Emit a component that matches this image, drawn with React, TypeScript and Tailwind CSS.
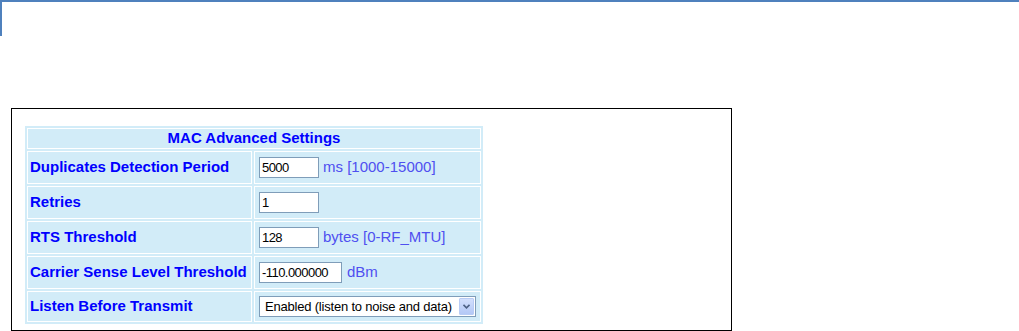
import React from "react";

const Input = ({ value, w }: { value: string; w: string }) => (
  <div
    className={`flex h-[21px] items-center border border-[#7f9db9] bg-white pl-[2px] text-[13px] leading-none tracking-[-0.55px] text-black ${w}`}
  >
    {value}
  </div>
);

const Label = ({ children, h = "h-[33px]" }: { children: React.ReactNode; h?: string }) => (
  <div className={`flex items-center whitespace-nowrap border border-white bg-[#d2ecf8] pl-[2px] text-[15px] font-bold text-[#0000ff] ${h}`}>
    {children}
  </div>
);

const Value = ({ children, h = "h-[33px]" }: { children: React.ReactNode; h?: string }) => (
  <div className={`flex items-center border border-white bg-[#d2ecf8] pl-[4px] ${h}`}>{children}</div>
);

const Unit = ({ children, ml = "ml-[4px]" }: { children: React.ReactNode; ml?: string }) => (
  <span className={`${ml} text-[15px] text-[#4f4ff0]`}>{children}</span>
);

export default function App() {
  return (
    <div className="h-[331px] w-[1019px] overflow-hidden bg-white font-['Liberation_Sans',Arial,sans-serif]">
      <div className="h-[36px] border-l-2 border-t-2 border-[#4f81bd]" />
      <div className="ml-[11px] mt-[72px] h-[223px] w-[721px] border border-black pl-[13px] pt-[17px]">
        <div className="grid w-[458px] grid-cols-[225px_227px] gap-[2px] bg-[#d2ecf8] p-[2px]">
          <div className="col-span-2 flex h-[21px] items-center justify-center border border-white bg-[#d2ecf8] text-[15px] font-bold text-[#0000ff]">
            MAC Advanced Settings
          </div>

          <Label>Duplicates Detection Period</Label>
          <Value>
            <Input value="5000" w="w-[60px]" />
            <Unit>ms [1000-15000]</Unit>
          </Value>

          <Label>Retries</Label>
          <Value>
            <Input value="1" w="w-[60px]" />
          </Value>

          <Label>RTS Threshold</Label>
          <Value>
            <Input value="128" w="w-[60px]" />
            <Unit>bytes [0-RF_MTU]</Unit>
          </Value>

          <Label>Carrier Sense Level Threshold</Label>
          <Value>
            <Input value="-110.000000" w="w-[83px]" />
            <Unit ml="ml-[5px]">dBm</Unit>
          </Value>

          <Label h="h-[31px]">Listen Before Transmit</Label>
          <Value h="h-[31px]">
            <div className="flex h-[21px] w-[217px] items-center border border-[#7f9db9] bg-white text-[13px] leading-none tracking-[-0.2px] text-black">
              <span className="flex-1 pl-[5px]">Enabled (listen to noise and data)</span>
              <div className="mr-[1px] flex h-[17px] w-[15px] items-center justify-center rounded-[1px] border border-[#b8ccf5] bg-gradient-to-b from-[#d3e0fd] to-[#b3c8f6]">
                <svg width="7" height="5" viewBox="0 0 7 5">
                  <path d="M0.5 0.8 L3.5 3.8 L6.5 0.8" fill="none" stroke="#4d6185" strokeWidth="1.6" />
                </svg>
              </div>
            </div>
          </Value>
        </div>
      </div>
    </div>
  );
}
